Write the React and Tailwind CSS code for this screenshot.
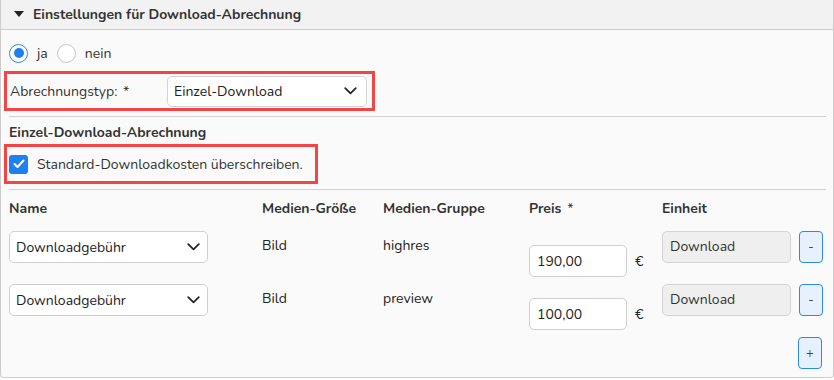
import React from "react";

const Chevron = () => (
  <svg width="13" height="8" viewBox="0 0 13 8" fill="none">
    <path d="M1.2 1.2 L6.5 6.3 L11.8 1.2" stroke="#222" strokeWidth="1.7" strokeLinecap="round" strokeLinejoin="round" />
  </svg>
);

function Row({ group, price }) {
  return (
    <div className="grid grid-cols-[253px_121px_146px_133px_137px_24px] h-[45px]">
      <div>
        <div className="w-[199px] h-[32px] bg-white border border-[#cfcfcf] rounded-[5px] flex items-center justify-between pl-[6px] pr-[7px]">
          <span>Downloadgebühr</span>
          <Chevron />
        </div>
      </div>
      <div className="pt-[4px]">Bild</div>
      <div className="pt-[4px]">{group}</div>
      <div className="pt-[14px] flex items-start">
        <div className="w-[98px] h-[32px] bg-white border border-[#cfcfcf] rounded-[5px] flex items-center pl-[7px]">{price}</div>
        <span className="ml-[8px] mt-[6px]">€</span>
      </div>
      <div>
        <div className="w-[129px] h-[32px] bg-[#efefef] border border-[#d4d4d4] rounded-[5px] flex items-center pl-[7px] pb-[2px] text-[#333]">Download</div>
      </div>
      <div>
        <button className="w-[24px] h-[32px] bg-[#e6f1fd] border border-[#2b8ae8] rounded-[4px] flex items-center justify-center text-[13px] text-[#444] leading-none">-</button>
      </div>
    </div>
  );
}

export default function App() {
  return (
    <div className="w-[834px] h-[380px] bg-white text-[14px] text-[#222]" style={{ fontFamily: "Nunito, 'Noto Sans', sans-serif" }}>
      <div className="w-[834px] h-[378px] border-r border-b border-l border-[#cdcdcd] rounded-b-[4px] bg-[#fafafa] overflow-hidden">
        <div className="h-[30px] bg-[#f2f2f2] border-b border-[#cdcdcd] flex items-center pl-[13px]">
          <svg width="10" height="7" viewBox="0 0 10 7" className="mr-[9px]">
            <path d="M0 0 L10 0 L5 6 Z" fill="#222" />
          </svg>
          <span className="font-bold text-[#333]">Einstellungen für Download-Abrechnung</span>
        </div>
        <div className="pl-[8px] pr-[7px]">
          <div className="flex items-center h-[22px] mt-[12px]">
            <span className="w-[19px] h-[19px] rounded-full border-[1.5px] border-[#2b8ae8] bg-white flex items-center justify-center">
              <span className="w-[10px] h-[10px] rounded-full bg-[#1f7ff0]" />
            </span>
            <span className="ml-[9px] text-[#333]">ja</span>
            <span className="ml-[9px] w-[19px] h-[19px] rounded-full border border-[#c8c8c8] bg-white" />
            <span className="ml-[9px] text-[#333]">nein</span>
          </div>
          <div className="mt-[7px] -ml-[5px] w-[371px] h-[40px] border-[3px] border-[#f24646] flex items-center">
            <span className="ml-[3px] w-[157px] text-[#333]">Abrechnungstyp: <span className="ml-[2px]">*</span></span>
            <div className="w-[200px] h-[31px] bg-white border border-[#d4d4d4] rounded-[5px] flex items-center justify-between pl-[6px] pr-[9px]">
              <span>Einzel-Download</span>
              <Chevron />
            </div>
          </div>
          <div className="mt-[5px] border-t border-[#d2d2d2]" />
          <div className="mt-[7px] font-bold text-[#333] leading-[18px]">Einzel-Download-Abrechnung</div>
          <div className="mt-[2px] -ml-[5px] w-[314px] h-[40px] border-[3px] border-[#f24646] flex items-center">
            <span className="ml-[2px] w-[19px] h-[19px] rounded-[3px] bg-[#1f80f0] flex items-center justify-center">
              <svg width="12" height="10" viewBox="0 0 12 10">
                <path d="M1.5 5 L4.5 8 L10.5 1.5" stroke="white" strokeWidth="2" fill="none" strokeLinecap="round" strokeLinejoin="round" />
              </svg>
            </span>
            <span className="ml-[9px] text-[#333]">Standard-Downloadkosten überschreiben.</span>
          </div>
          <div className="mt-[5px] border-t border-[#d2d2d2]" />
          <div className="grid grid-cols-[253px_121px_146px_133px_137px_24px] font-bold text-[#333] mt-[8px] h-[25px]">
            <div>Name</div>
            <div>Medien-Größe</div>
            <div>Medien-Gruppe</div>
            <div>Preis <span className="font-normal ml-[2px]">*</span></div>
            <div>Einheit</div>
            <div />
          </div>
          <div className="mt-[8px]">
            <Row group="highres" price="190,00" />
            <div className="h-[8px]" />
            <Row group="preview" price="100,00" />
          </div>
          <div className="flex justify-end pr-[4px] mt-[8px]">
            <button className="w-[24px] h-[32px] bg-[#e6f1fd] border border-[#2b8ae8] rounded-[4px] flex items-center justify-center text-[13px] text-[#444] leading-none">+</button>
          </div>
        </div>
      </div>
    </div>
  );
}
